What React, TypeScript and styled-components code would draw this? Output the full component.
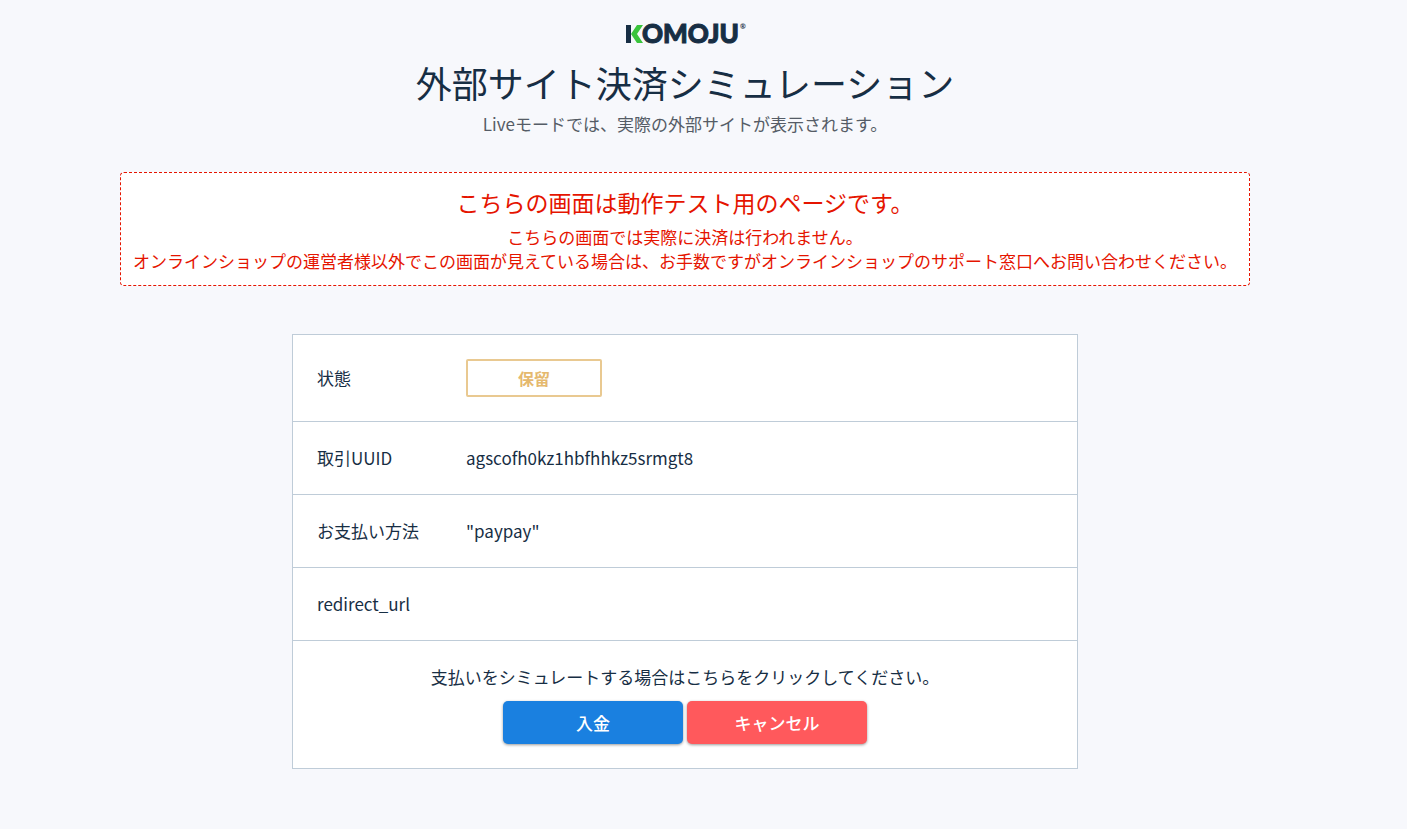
import React from "react";
import styled, { createGlobalStyle } from "styled-components";

const GlobalStyle = createGlobalStyle`
  * {
    box-sizing: border-box;
  }
  body {
    margin: 0;
    background: #f7f8fc;
    color: #172e44;
    font-family: "Noto Sans CJK JP", sans-serif;
    font-size: 17px;
    line-height: 24px;
  }
`;

const Page = styled.div`
  display: flex;
  flex-direction: column;
  align-items: center;
  padding: 24px 37px 60px 0;
`;

const Header = styled.header`
  display: flex;
  flex-direction: column;
  align-items: center;
  text-align: center;
`;

const Logo = styled.svg`
  display: block;
  width: 120px;
  height: 20px;
  overflow: visible;
`;

const LogoText = styled.text`
  font-family: Lato, sans-serif;
  font-weight: 900;
  font-size: 26px;
  fill: #172e44;
  stroke: #172e44;
  stroke-width: 1px;
`;

const LogoMark = styled.text`
  font-family: Lato, sans-serif;
  font-weight: 700;
  font-size: 7px;
  fill: #172e44;
`;

const Title = styled.h1`
  margin: 14px 0 0;
  font-size: 36px;
  line-height: 48px;
  font-weight: 400;
`;

const Subtitle = styled.p`
  margin: 6px 0 0;
  color: #555c66;
`;

const Warning = styled.section`
  width: 100%;
  max-width: 1130px;
  margin-top: 36px;
  padding: 13px 8px 12px;
  border: 1px dashed #e51400;
  border-radius: 4px;
  background: #fff;
  color: #e51400;
  text-align: center;
`;

const WarningTitle = styled.h2`
  margin: 0 0 7px;
  font-size: 23px;
  line-height: 32px;
  font-weight: 400;
`;

const WarningText = styled.p`
  margin: 0;
`;

const Card = styled.main`
  width: 100%;
  max-width: 786px;
  margin-top: 48px;
  border: 1px solid #bfccd8;
  background: #fff;
`;

const Details = styled.dl`
  margin: 0;
`;

const Row = styled.div`
  display: grid;
  grid-template-columns: 149px 1fr;
  align-items: center;
  padding: 24px;
  border-bottom: 1px solid #bfccd8;
`;

const Label = styled.dt`
  margin: 0;
`;

const Value = styled.dd`
  margin: 0;
`;

const Badge = styled.span`
  display: flex;
  align-items: center;
  justify-content: center;
  width: 136px;
  height: 38px;
  border: 2px solid #e9c991;
  border-radius: 2px;
  color: #e5b96f;
  font-size: 16px;
  font-weight: 700;
`;

const Actions = styled.div`
  padding: 24px;
  text-align: center;
`;

const Prompt = styled.p`
  margin: 0;
`;

const Buttons = styled.div`
  display: flex;
  justify-content: center;
  gap: 4px;
  margin-top: 12px;
`;

const Button = styled.button<{ $color: string }>`
  width: 180px;
  height: 43px;
  padding: 0;
  border: 0;
  border-radius: 5px;
  background: ${(p) => p.$color};
  box-shadow: 0 1px 3px rgba(0, 0, 0, 0.4);
  color: #fff;
  font: inherit;
  font-weight: 500;
  cursor: pointer;
`;

export default function App() {
  return (
    <>
      <GlobalStyle />
      <Page>
        <Header>
          <Logo viewBox="0 0 120 20" role="img" aria-label="KOMOJU">
            <path d="M1 1h5v18H1z" fill="#172e44" />
            <path d="M12 1h6l-6 9 6 9h-6l-6-9z" fill="#3ac43c" />
            <LogoText x="17" y="19">OMOJU</LogoText>
            <LogoMark x="115" y="5">®</LogoMark>
          </Logo>
          <Title>外部サイト決済シミュレーション</Title>
          <Subtitle>Liveモードでは、実際の外部サイトが表示されます。</Subtitle>
        </Header>
        <Warning>
          <WarningTitle>こちらの画面は動作テスト用のページです。</WarningTitle>
          <WarningText>こちらの画面では実際に決済は行われません。</WarningText>
          <WarningText>
            オンラインショップの運営者様以外でこの画面が見えている場合は、お手数ですがオンラインショップのサポート窓口へお問い合わせください。
          </WarningText>
        </Warning>
        <Card>
          <Details>
            <Row>
              <Label>状態</Label>
              <Value>
                <Badge>保留</Badge>
              </Value>
            </Row>
            <Row>
              <Label>取引UUID</Label>
              <Value>agscofh0kz1hbfhhkz5srmgt8</Value>
            </Row>
            <Row>
              <Label>お支払い方法</Label>
              <Value>"paypay"</Value>
            </Row>
            <Row>
              <Label>redirect_url</Label>
              <Value />
            </Row>
          </Details>
          <Actions>
            <Prompt>支払いをシミュレートする場合はこちらをクリックしてください。</Prompt>
            <Buttons>
              <Button type="button" $color="#1a80e0">入金</Button>
              <Button type="button" $color="#ff595c">キャンセル</Button>
            </Buttons>
          </Actions>
        </Card>
      </Page>
    </>
  );
}
